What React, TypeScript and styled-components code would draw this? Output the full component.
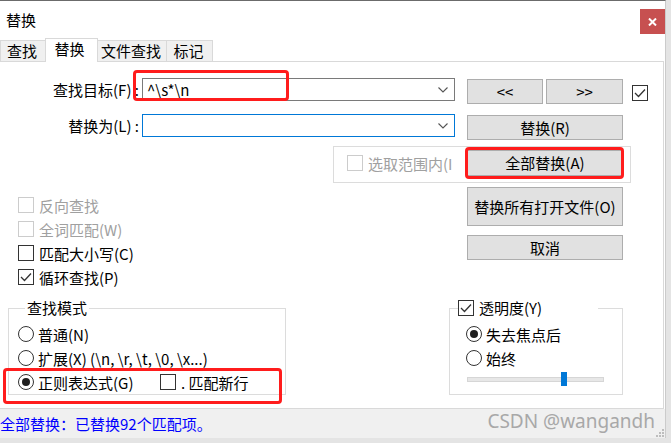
import React from "react";
import styled, { createGlobalStyle } from "styled-components";

const GlobalStyle = createGlobalStyle`
  html, body {
    margin: 0;
    padding: 0;
  }
  body {
    background: #e4e4e4;
    font-family: "Noto Sans CJK SC", "Noto Sans", sans-serif;
    font-size: 15px;
    color: #000;
  }
  * {
    box-sizing: border-box;
  }
`;

const Frame = styled.div`
  position: relative;
  width: 666px;
  height: 438px;
  background: #fff;
  border-top: 1px solid #6b6b6b;
  border-right: 1px solid #cbcbcb;
  display: flex;
  flex-direction: column;
`;

const TitleBar = styled.div`
  height: 37px;
  display: flex;
  align-items: flex-start;
  justify-content: space-between;
`;

const Title = styled.div`
  padding: 9px 0 0 6px;
  line-height: 20px;
`;

const CloseButton = styled.div`
  margin-top: 8px;
  width: 25px;
  height: 25px;
  background: #c75050;
  display: grid;
  place-items: center;
`;

const TabStrip = styled.div`
  height: 23px;
  display: flex;
  align-items: flex-end;
`;

const Tab = styled.div<{ $active?: boolean; $w: number }>`
  position: relative;
  width: ${(p) => p.$w}px;
  height: ${(p) => (p.$active ? 24 : 21)}px;
  margin-bottom: ${(p) => (p.$active ? -1 : 0)}px;
  margin-right: -1px;
  z-index: ${(p) => (p.$active ? 1 : 0)};
  background: ${(p) => (p.$active ? "#fff" : "#f0f0f0")};
  border: 1px solid #d9d9d9;
  border-bottom: none;
  text-align: center;
  line-height: ${(p) => (p.$active ? 19 : 20)}px;
  padding-right: ${(p) => (p.$active ? 4 : 2)}px;
  white-space: nowrap;
`;

const Panel = styled.div`
  width: 664px;
  height: 348px;
  border: 1px solid #d9d9d9;
  border-left: none;
  display: flex;
  flex-direction: column;
  padding-top: 16px;
`;

const FieldRow = styled.div`
  display: flex;
  align-items: flex-start;
  height: 26px;
  & + & {
    margin-top: 10px;
  }
`;

const FieldLabel = styled.div`
  width: 142px;
  padding-right: 3px;
  text-align: right;
  line-height: 23px;
  white-space: nowrap;
`;

const Combo = styled.div<{ $focused?: boolean }>`
  width: 313px;
  height: 23px;
  border: 1px solid ${(p) => (p.$focused ? "#0078d7" : "#7a7a7a")};
  display: flex;
  align-items: center;
  justify-content: space-between;
  padding: 0 6px 0 4px;
  line-height: 20px;
`;

const Button = styled.div<{ $w?: number; $h?: number }>`
  width: ${(p) => p.$w ?? 156}px;
  height: ${(p) => p.$h ?? 25}px;
  background: #e1e1e1;
  border: 1px solid #adadad;
  display: flex;
  align-items: center;
  justify-content: center;
  line-height: 20px;
  white-space: nowrap;
`;

const ButtonPair = styled.div`
  display: flex;
  gap: 3px;
  margin: 1px 0 0 12px;
`;

const SideButton = styled.div`
  margin: 1px 0 0 12px;
`;

const Box = styled.div<{ $disabled?: boolean }>`
  flex: none;
  width: 16px;
  height: 16px;
  border: 1px solid ${(p) => (p.$disabled ? "#cccccc" : "#333333")};
  background: #fff;
  display: grid;
  place-items: center;
`;

const TopBox = styled(Box)`
  margin: 7px 0 0 9px;
`;

const RangeGroup = styled.div`
  margin: 6px 0 0 333px;
  width: 298px;
  height: 37px;
  border: 1px solid #dcdcdc;
  display: flex;
  align-items: flex-start;
  justify-content: space-between;
  padding: 3px 7px 0 13px;
`;

const RangeLabel = styled.div`
  display: flex;
  align-items: center;
  gap: 5px;
  height: 26px;
  white-space: nowrap;
  color: #a0a0a0;
`;

const Middle = styled.div`
  display: flex;
  margin-top: 4px;
`;

const CheckColumn = styled.div`
  width: 467px;
  padding: 6px 0 0 18px;
`;

const OptionRow = styled.div<{ $disabled?: boolean }>`
  display: flex;
  align-items: center;
  height: 24px;
  gap: 5px;
  white-space: nowrap;
  color: ${(p) => (p.$disabled ? "#a0a0a0" : "#000")};
`;

const ButtonColumn = styled.div`
  display: flex;
  flex-direction: column;
  gap: 9px;
`;

const Bottom = styled.div`
  display: flex;
  align-items: flex-start;
  margin-top: 9px;
`;

const Group = styled.fieldset<{ $left: number; $w: number; $pad: number }>`
  margin: 0 0 0 ${(p) => p.$left}px;
  width: ${(p) => p.$w}px;
  height: 97px;
  border: 1px solid #dcdcdc;
  padding: 4px 0 0 ${(p) => p.$pad}px;
  min-width: 0;
`;

const Legend = styled.legend`
  margin-left: 7px;
  padding: 0 2px;
  line-height: 20px;
`;

const CheckLegend = styled.legend`
  margin-left: -8px;
  padding: 0;
  width: 140px;
  height: 20px;
  display: flex;
  align-items: center;
  gap: 5px;
  line-height: 20px;
`;

const Radio = styled.div<{ $on?: boolean }>`
  flex: none;
  width: 16px;
  height: 16px;
  border-radius: 50%;
  border: 1px solid #333;
  display: grid;
  place-items: center;
  &::after {
    content: "";
    display: ${(p) => (p.$on ? "block" : "none")};
    width: 8px;
    height: 8px;
    border-radius: 50%;
    background: #1e1e1e;
  }
`;

const RadioRow = styled.div`
  display: flex;
  align-items: center;
  height: 24px;
  white-space: nowrap;
`;

const RadioLabel = styled.div<{ $w?: number }>`
  display: flex;
  align-items: center;
  gap: 4px;
  width: ${(p) => (p.$w ? `${p.$w}px` : "auto")};
`;

const Slider = styled.div`
  position: relative;
  margin: 2px 0 0 1px;
  width: 137px;
  height: 14px;
  display: flex;
  align-items: center;
`;

const Track = styled.div`
  width: 100%;
  height: 5px;
  background: #e7e7e7;
  border: 1px solid #d6d6d6;
`;

const Thumb = styled.div`
  position: absolute;
  top: 0;
  width: 6px;
  height: 14px;
  background: #0078d7;
`;

const StatusBar = styled.div`
  flex: 1;
  background: #f0f0f0;
  display: flex;
  align-items: center;
  justify-content: space-between;
`;

const StatusText = styled.div`
  color: #0000ff;
  line-height: 20px;
`;

const Watermark = styled.div`
  align-self: flex-start;
  margin-left: auto;
  font-family: "Noto Sans", sans-serif;
  font-size: 19px;
  line-height: 24px;
  color: #a8a8a8;
  white-space: nowrap;
`;

const Grip = styled.svg`
  align-self: flex-end;
  margin: 0 1px 1px 0;
`;

const Highlight = styled.div<{ $x: number; $y: number; $w: number; $h: number }>`
  position: absolute;
  left: ${(p) => p.$x}px;
  top: ${(p) => p.$y}px;
  width: ${(p) => p.$w}px;
  height: ${(p) => p.$h}px;
  border: 3px solid #ff1c1c;
  border-radius: 4px;
  pointer-events: none;
`;

const Check = () => (
  <svg width="12" height="10" viewBox="0 0 12 10">
    <polyline points="1,5 4.5,8.5 11,1.5" fill="none" stroke="#333" strokeWidth="1.3" />
  </svg>
);

const Chevron = () => (
  <svg width="10" height="6" viewBox="0 0 10 6">
    <polyline points="0.5,0.5 5,5 9.5,0.5" fill="none" stroke="#555" strokeWidth="1.1" />
  </svg>
);

const CheckBox: React.FC<{ checked?: boolean; disabled?: boolean }> = ({ checked, disabled }) => (
  <Box $disabled={disabled}>{checked && <Check />}</Box>
);

export default function App() {
  return (
    <>
      <GlobalStyle />
      <Frame>
        <TitleBar>
          <Title>替换</Title>
          <CloseButton>
            <svg width="9" height="8" viewBox="0 0 9 8">
              <path d="M1 0.5 L8 7.5 M8 0.5 L1 7.5" stroke="#fff" strokeWidth="2" />
            </svg>
          </CloseButton>
        </TitleBar>

        <TabStrip>
          <Tab $w={46}>查找</Tab>
          <Tab $w={53} $active>
            替换
          </Tab>
          <Tab $w={70}>文件查找</Tab>
          <Tab $w={47}>标记</Tab>
        </TabStrip>

        <Panel>
          <FieldRow>
            <FieldLabel>查找目标(F) :</FieldLabel>
            <Combo>
              <span>^\s*\n</span>
              <Chevron />
            </Combo>
            <ButtonPair>
              <Button $w={76}>{"<<"}</Button>
              <Button $w={77}>{">>"}</Button>
            </ButtonPair>
            <TopBox>
              <Check />
            </TopBox>
          </FieldRow>
          <FieldRow>
            <FieldLabel>替换为(L) :</FieldLabel>
            <Combo $focused>
              <span />
              <Chevron />
            </Combo>
            <SideButton>
              <Button>替换(R)</Button>
            </SideButton>
          </FieldRow>

          <RangeGroup>
            <RangeLabel>
              <CheckBox disabled />
              选取范围内(I
            </RangeLabel>
            <Button $h={26}>全部替换(A)</Button>
          </RangeGroup>

          <Middle>
            <CheckColumn>
              <OptionRow $disabled>
                <CheckBox disabled />
                反向查找
              </OptionRow>
              <OptionRow $disabled>
                <CheckBox disabled />
                全词匹配(W)
              </OptionRow>
              <OptionRow>
                <CheckBox />
                匹配大小写(C)
              </OptionRow>
              <OptionRow>
                <CheckBox checked />
                循环查找(P)
              </OptionRow>
            </CheckColumn>
            <ButtonColumn>
              <Button $h={39}>替换所有打开文件(O)</Button>
              <Button>取消</Button>
            </ButtonColumn>
          </Middle>

          <Bottom>
            <Group $left={8} $w={278} $pad={9}>
              <Legend>查找模式</Legend>
              <RadioRow>
                <RadioLabel>
                  <Radio />
                  普通(N)
                </RadioLabel>
              </RadioRow>
              <RadioRow>
                <RadioLabel>
                  <Radio />
                  扩展(X) (\n, \r, \t, \0, \x...)
                </RadioLabel>
              </RadioRow>
              <RadioRow>
                <RadioLabel $w={142}>
                  <Radio $on />
                  正则表达式(G)
                </RadioLabel>
                <OptionRow>
                  <CheckBox />. 匹配新行
                </OptionRow>
              </RadioRow>
            </Group>

            <Group $left={163} $w={174} $pad={16}>
              <CheckLegend>
                <CheckBox checked />
                透明度(Y)
              </CheckLegend>
              <RadioRow>
                <RadioLabel>
                  <Radio $on />
                  失去焦点后
                </RadioLabel>
              </RadioRow>
              <RadioRow>
                <RadioLabel>
                  <Radio />
                  始终
                </RadioLabel>
              </RadioRow>
              <Slider>
                <Track />
                <Thumb style={{ left: 94 }} />
              </Slider>
            </Group>
          </Bottom>
        </Panel>

        <StatusBar>
          <StatusText>全部替换：已替换92个匹配项。</StatusText>
          <Watermark>CSDN @wangandh</Watermark>
          <Grip width="9" height="9" viewBox="0 0 9 9">
            <g fill="#bdbdbd">
              <rect x="7" y="1" width="2" height="2" />
              <rect x="4" y="4" width="2" height="2" />
              <rect x="7" y="4" width="2" height="2" />
              <rect x="1" y="7" width="2" height="2" />
              <rect x="4" y="7" width="2" height="2" />
              <rect x="7" y="7" width="2" height="2" />
            </g>
          </Grip>
        </StatusBar>

        <Highlight $x={133} $y={69} $w={156} $h={31} />
        <Highlight $x={465} $y={146} $w={159} $h={32} />
        <Highlight $x={3} $y={367} $w={279} $h={36} />
      </Frame>
    </>
  );
}
